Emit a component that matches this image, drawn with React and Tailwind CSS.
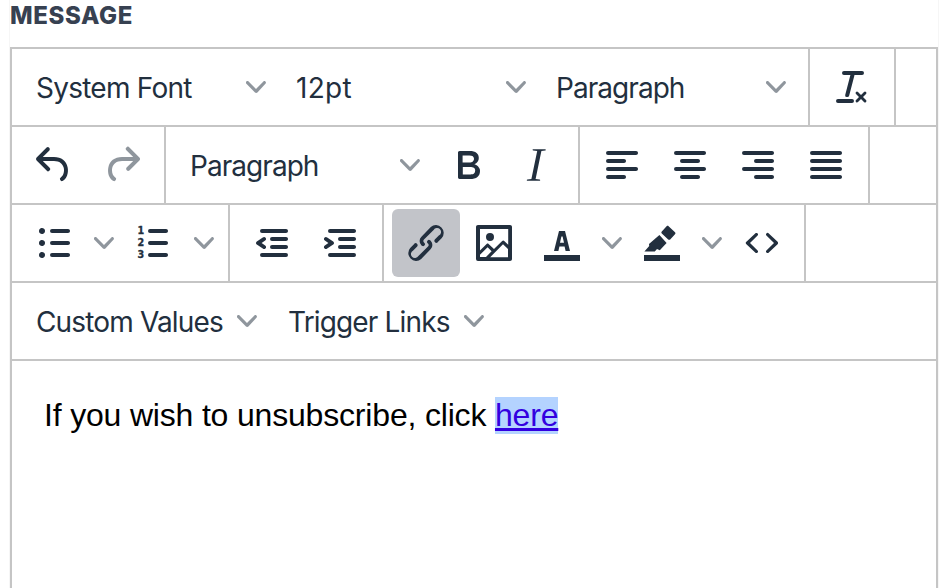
const bar = 'M3 18h18v3H3z';

const icons = {
  undo: 'M6.4 8H12c3.7 0 6.2 2 6.8 5.1.6 2.7-.4 5.6-2.3 6.8a1 1 0 0 1-1-1.8c1.1-.6 1.8-2.7 1.4-4.6-.5-2.1-2.1-3.5-4.9-3.5H6.4l3.3 3.3a1 1 0 1 1-1.4 1.4l-5-5a1 1 0 0 1 0-1.4l5-5a1 1 0 0 1 1.4 1.4L6.4 8Z',
  redo: 'M17.6 10H12c-2.8 0-4.4 1.4-4.9 3.5-.4 2 .3 4 1.4 4.6a1 1 0 1 1-1 1.8c-2-1.2-2.9-4.1-2.3-6.8.6-3 3-5.1 6.8-5.1h5.6l-3.3-3.3a1 1 0 1 1 1.4-1.4l5 5a1 1 0 0 1 0 1.4l-5 5a1 1 0 0 1-1.4-1.4l3.3-3.3Z',
  bold: 'M7.8 19c-.3 0-.5 0-.6-.2l-.2-.5V5.7c0-.2 0-.4.2-.5l.6-.2h5c1.5 0 2.7.3 3.5 1 .7.6 1.1 1.4 1.1 2.5a3 3 0 0 1-.6 1.9c-.4.6-1 1-1.6 1.2.4.1.9.3 1.3.6s.8.7 1 1.2c.4.4.5 1 .5 1.6 0 1.3-.4 2.3-1.3 3-.8.7-2.1 1-3.8 1H7.8Zm5-8.3c.6 0 1.2-.1 1.6-.5.4-.3.6-.7.6-1.3 0-1.1-.8-1.7-2.3-1.7H9.3v3.5h3.4Zm.5 6c.7 0 1.3-.1 1.7-.4.4-.4.6-.9.6-1.5s-.2-1-.7-1.4c-.4-.3-1-.4-2-.4H9.4v3.8h4Z',
  italic: 'm16.7 4.7-2 .3-2.9 14 2 .3c.2 0 .3.1.3.3 0 .1 0 .2-.2.3H7.7c-.2 0-.3-.1-.3-.3 0-.2.1-.3.3-.3l2-.3L12.6 5l-2-.3c-.2 0-.3-.1-.3-.3l.1-.3h6.2c.2 0 .3.1.3.3 0 .2-.1.3-.2.3Z',
  clear: 'M13.2 6a1 1 0 0 1 0 .2l-2.6 10a1 1 0 0 1-1 .8h-.2a.8.8 0 0 1-.8-1l2.6-10H8a1 1 0 1 1 0-2h9a1 1 0 0 1 0 2h-3.8ZM5 18h7a1 1 0 0 1 0 2H5a1 1 0 0 1 0-2Zm13 1.5L16.5 18 15 19.5a.7.7 0 0 1-1-1l1.5-1.5-1.5-1.5a.7.7 0 0 1 1-1l1.5 1.5 1.5-1.5a.7.7 0 0 1 1 1L17.5 17l1.5 1.5a.7.7 0 0 1-1 1Z',
  left: 'M5 5h14c.6 0 1 .4 1 1s-.4 1-1 1H5a1 1 0 1 1 0-2Zm0 4h8c.6 0 1 .4 1 1s-.4 1-1 1H5a1 1 0 1 1 0-2Zm0 8h8c.6 0 1 .4 1 1s-.4 1-1 1H5a1 1 0 0 1 0-2Zm0-4h14c.6 0 1 .4 1 1s-.4 1-1 1H5a1 1 0 0 1 0-2Z',
  center: 'M5 5h14c.6 0 1 .4 1 1s-.4 1-1 1H5a1 1 0 1 1 0-2Zm3 4h8c.6 0 1 .4 1 1s-.4 1-1 1H8a1 1 0 1 1 0-2Zm0 8h8c.6 0 1 .4 1 1s-.4 1-1 1H8a1 1 0 0 1 0-2Zm-3-4h14c.6 0 1 .4 1 1s-.4 1-1 1H5a1 1 0 0 1 0-2Z',
  right: 'M5 5h14c.6 0 1 .4 1 1s-.4 1-1 1H5a1 1 0 1 1 0-2Zm6 4h8c.6 0 1 .4 1 1s-.4 1-1 1h-8a1 1 0 0 1 0-2Zm0 8h8c.6 0 1 .4 1 1s-.4 1-1 1h-8a1 1 0 0 1 0-2Zm-6-4h14c.6 0 1 .4 1 1s-.4 1-1 1H5a1 1 0 0 1 0-2Z',
  justify: 'M5 5h14c.6 0 1 .4 1 1s-.4 1-1 1H5a1 1 0 1 1 0-2Zm0 4h14c.6 0 1 .4 1 1s-.4 1-1 1H5a1 1 0 1 1 0-2Zm0 4h14c.6 0 1 .4 1 1s-.4 1-1 1H5a1 1 0 0 1 0-2Zm0 4h14c.6 0 1 .4 1 1s-.4 1-1 1H5a1 1 0 0 1 0-2Z',
  bullets: 'M11 5h8c.6 0 1 .4 1 1s-.4 1-1 1h-8a1 1 0 0 1 0-2Zm0 6h8c.6 0 1 .4 1 1s-.4 1-1 1h-8a1 1 0 0 1 0-2Zm0 6h8c.6 0 1 .4 1 1s-.4 1-1 1h-8a1 1 0 0 1 0-2ZM4.5 6c0-.4.1-.8.4-1 .3-.4.7-.5 1.1-.5s.8.1 1 .4c.4.3.5.7.5 1.1s-.1.8-.4 1c-.3.4-.7.5-1.1.5s-.8-.1-1-.4c-.4-.3-.5-.7-.5-1.1Zm0 6c0-.4.1-.8.4-1 .3-.4.7-.5 1.1-.5s.8.1 1 .4c.4.3.5.7.5 1.1s-.1.8-.4 1c-.3.4-.7.5-1.1.5s-.8-.1-1-.4c-.4-.3-.5-.7-.5-1.1Zm0 6c0-.4.1-.8.4-1 .3-.4.7-.5 1.1-.5s.8.1 1 .4c.4.3.5.7.5 1.1s-.1.8-.4 1c-.3.4-.7.5-1.1.5s-.8-.1-1-.4c-.4-.3-.5-.7-.5-1.1Z',
  numbers: 'M10 17h8c.6 0 1 .4 1 1s-.4 1-1 1h-8a1 1 0 0 1 0-2Zm0-6h8c.6 0 1 .4 1 1s-.4 1-1 1h-8a1 1 0 0 1 0-2Zm0-6h8c.6 0 1 .4 1 1s-.4 1-1 1h-8a1 1 0 1 1 0-2Z',
  outdent: 'M7 5h12c.6 0 1 .4 1 1s-.4 1-1 1H7a1 1 0 1 1 0-2Zm5 4h7c.6 0 1 .4 1 1s-.4 1-1 1h-7a1 1 0 0 1 0-2Zm0 4h7c.6 0 1 .4 1 1s-.4 1-1 1h-7a1 1 0 0 1 0-2Zm-5 4h12a1 1 0 0 1 0 2H7a1 1 0 0 1 0-2Zm1.6-3.8a1 1 0 0 1-1.2 1.6l-3-2a1 1 0 0 1 0-1.6l3-2a1 1 0 0 1 1.2 1.6L6.8 12l1.8 1.2Z',
  indent: 'M7 5h12c.6 0 1 .4 1 1s-.4 1-1 1H7a1 1 0 1 1 0-2Zm5 4h7c.6 0 1 .4 1 1s-.4 1-1 1h-7a1 1 0 0 1 0-2Zm0 4h7c.6 0 1 .4 1 1s-.4 1-1 1h-7a1 1 0 0 1 0-2Zm-5 4h12a1 1 0 0 1 0 2H7a1 1 0 0 1 0-2Zm-2.6-3.8L6.2 12l-1.8-1.2a1 1 0 0 1 1.2-1.6l3 2a1 1 0 0 1 0 1.6l-3 2a1 1 0 1 1-1.2-1.6Z',
  link: 'M6.2 12.3a1 1 0 0 1 1.4 1.4l-2 2a2 2 0 1 0 2.6 2.8l4.8-4.8a1 1 0 0 0 0-1.4 1 1 0 1 1 1.4-1.3 2.9 2.9 0 0 1 0 4L9.6 20a3.9 3.9 0 0 1-5.5-5.5l2-2Zm11.6-.6a1 1 0 0 1-1.4-1.4l2-2a2 2 0 1 0-2.6-2.8L11 10.3a1 1 0 0 0 0 1.4 1 1 0 1 1-1.4 1.3 2.9 2.9 0 0 1 0-4L14.4 4a3.9 3.9 0 0 1 5.5 5.5l-2 2Z',
  image: 'M5 15.7l3.3-3.2c.3-.3.7-.3 1 0L12 15l4.1-4c.3-.4.8-.4 1 0l2 1.9V5H5v10.7ZM5 18V19h3l2.8-2.9-2-2L5 17.9Zm14-3-2.5-2.4-6.4 6.5H19v-4ZM4 3h16c.6 0 1 .4 1 1v16c0 .6-.4 1-1 1H4a1 1 0 0 1-1-1V4c0-.6.4-1 1-1Zm6 8a2 2 0 1 0 0-4 2 2 0 0 0 0 4Z',
  textColor: bar + 'M8 16 10.5 6h3L16 16h-2.2l-.5-2.3h-2.6l-.5 2.3H8ZM11 11.9h2l-.7-3.2h-.6l-.7 3.2Z',
  highlight: bar + 'M10.7 8l3.6 4-3.4 3.6-1.4-.6-1.1 1.3H3.2l2.4-2.8-.1-1 5.2-4.5Zm3.6-4.4c.3-.3.7-.3 1 0l3.2 3c.3.3.3.7 0 1L16.1 10.2c-.3.3-.7.3-1 0l-3.2-3c-.3-.3-.3-.7 0-1l2.4-2.6Z',
  code: 'M9.8 15.7c.3.3.3.8 0 1-.3.4-.9.4-1.2 0l-4.4-4.1a.8.8 0 0 1 0-1.2l4.4-4.2c.3-.3.9-.3 1.2 0 .3.3.3.8 0 1.1L6 12l3.8 3.7ZM14.2 15.7c-.3.3-.3.8 0 1 .4.4.9.4 1.2 0l4.4-4.1c.3-.3.3-.9 0-1.2l-4.4-4.2a.8.8 0 0 0-1.2 0c-.3.3-.3.8 0 1.1L18 12l-3.8 3.7Z',
};

const Chevron = () => (
  <svg width="20" height="20" viewBox="0 0 10 10" className="shrink-0 fill-[#222f3e] opacity-50">
    <path d="M8.7 2.2c.3-.3.8-.3 1 0 .4.4.4.9 0 1.2L5.7 7.8c-.3.3-.9.3-1.2 0L.2 3.4a.8.8 0 0 1 0-1.2c.3-.3.8-.3 1.1 0L5 6l3.7-3.8Z" />
  </svg>
);

const ToolButton = ({ icon, active, muted, children }) => (
  <div className={`flex h-[68px] w-[68px] shrink-0 items-center justify-center rounded-[6px] ${active ? 'bg-[#c2c4c9]' : ''} ${muted ? 'opacity-50' : ''}`}>
    <svg width="48" height="48" viewBox="0 0 24 24" className="fill-[#222f3e]">
      <path d={icons[icon]} />
      {children}
    </svg>
  </div>
);

const SplitButton = ({ icon, children }) => (
  <div className="flex h-[68px] shrink-0 items-center">
    <ToolButton icon={icon}>{children}</ToolButton>
    <div className="flex w-[32px] justify-center">
      <Chevron />
    </div>
  </div>
);

const Select = ({ label, tracking = 'tracking-[-0.95px]' }) => (
  <div className="flex h-[68px] w-[260px] shrink-0 items-center justify-between pl-5 pr-[10px]">
    <span className={`pt-[2px] text-[28px] leading-none text-[#222f3e] ${tracking}`}>{label}</span>
    <Chevron />
  </div>
);

const MenuButton = ({ label, className = '' }) => (
  <div className={`flex h-[68px] shrink-0 items-center gap-[14px] pl-5 ${className}`}>
    <span className="pt-[2px] text-[28px] leading-none tracking-[-0.85px] text-[#222f3e]">{label}</span>
    <Chevron />
  </div>
);

const Group = ({ children, className = '' }) => (
  <div className={`flex h-full items-center border-r-2 border-[#c5c5c5] ${className}`}>{children}</div>
);

const Row = ({ children }) => (
  <div className="flex h-[78px] items-center border-b-2 border-[#c5c5c5]">{children}</div>
);

const App = () => {
  return (
    <div className="h-[588px] w-[944px] overflow-hidden bg-white font-['Inter',sans-serif]">
      <div className="ml-[9px] h-full w-[930px] border-x border-[#f6f6f6]">
        <h2 className="h-[47px] pt-[1px] text-[24px] font-extrabold leading-[30px] tracking-[0.65px] text-[#374151]">
          MESSAGE
        </h2>
        <div className="h-[541px] w-[928px] border-2 border-b-0 border-[#c5c5c5]">
          <Row>
            <Group className="w-[798px] pl-1">
              <Select label="System Font" tracking="tracking-[-0.75px]" />
              <Select label="12pt" tracking="tracking-[0.3px]" />
              <Select label="Paragraph" />
            </Group>
            <Group className="px-2">
              <ToolButton icon="clear" />
            </Group>
          </Row>
          <Row>
            <Group className="px-2">
              <ToolButton icon="undo" />
              <ToolButton icon="redo" muted />
            </Group>
            <Group className="w-[414px] pl-1">
              <Select label="Paragraph" />
              <div className="ml-1 flex">
                <ToolButton icon="bold" />
                <ToolButton icon="italic" />
              </div>
            </Group>
            <Group className="px-2">
              <ToolButton icon="left" />
              <ToolButton icon="center" />
              <ToolButton icon="right" />
              <ToolButton icon="justify" />
            </Group>
          </Row>
          <Row>
            <Group className="px-2">
              <SplitButton icon="bullets" />
              <SplitButton icon="numbers">
                <g className="fill-[#222f3e] stroke-[#222f3e] stroke-[0.15px] font-['DejaVu_Sans',sans-serif] text-[4.8px] font-bold">
                  <text x="3.8" y="7.6">1</text>
                  <text x="3.8" y="13.6">2</text>
                  <text x="3.8" y="19.6">3</text>
                </g>
              </SplitButton>
            </Group>
            <Group className="px-2">
              <ToolButton icon="outdent" />
              <ToolButton icon="indent" />
            </Group>
            <Group className="px-2">
              <ToolButton icon="link" active />
              <ToolButton icon="image" />
              <SplitButton icon="textColor" />
              <SplitButton icon="highlight" />
              <ToolButton icon="code" />
            </Group>
          </Row>
          <Row>
            <div className="flex pl-1">
              <MenuButton label="Custom Values" className="w-[252px]" />
              <MenuButton label="Trigger Links" />
            </div>
          </Row>
          <div className="px-8 pt-[35px] font-['Liberation_Sans',sans-serif] text-[32px] leading-[38px] tracking-[-0.18px] text-black">
            If you wish to unsubscribe, click{' '}
            <a href="#here" className="bg-[#b4d3ff] pb-px text-[#3300e0] underline">here</a>
          </div>
        </div>
      </div>
    </div>
  );
};

export default App;
